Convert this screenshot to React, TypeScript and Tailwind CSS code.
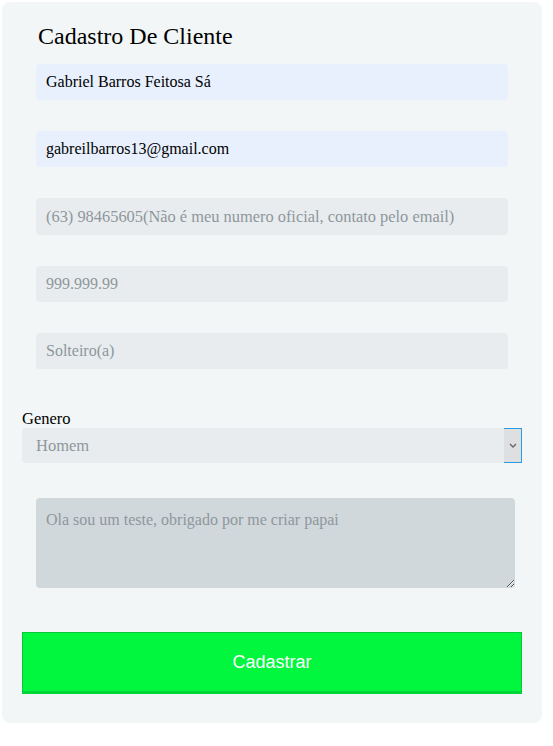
import * as React from 'react';

const serif = "font-['Liberation_Serif',serif]";

export default function App() {
  const [nome, setNome] = React.useState('Gabriel Barros Feitosa Sá');
  const [email, setEmail] = React.useState('gabreilbarros13@gmail.com');

  return (
    <div className={`bg-white min-h-[746px] pt-[2px] pl-[2px] ${serif}`}>
      <form
        className="w-[540px] h-[721px] bg-[#f2f6f7] rounded-lg pt-[20px] px-[20px]"
        onSubmit={(e) => e.preventDefault()}>
        <h2 className="text-[24px] leading-[28px] text-black ml-[16px] mb-[14px]">
          Cadastro De Cliente
        </h2>
        <div className="flex flex-col gap-[31px] ml-[14px] w-[472px]">
          <input
            className="h-[36px] rounded bg-[#e8f0fe] px-[10px] text-[16px] text-black outline-none"
            value={nome}
            onChange={(e) => setNome(e.target.value)}
          />
          <input
            className="h-[36px] rounded bg-[#e8f0fe] px-[10px] text-[16px] text-black outline-none"
            value={email}
            onChange={(e) => setEmail(e.target.value)}
          />
          <input
            className="h-[37px] rounded bg-[#e8ecee] px-[10px] text-[16.4px] placeholder:text-[#8e979c] outline-none"
            placeholder="(63) 98465605(Não é meu numero oficial, contato pelo email)"
          />
          <input
            className="h-[36px] rounded bg-[#e8ecee] px-[10px] text-[16px] placeholder:text-[#8e979c] outline-none"
            placeholder="999.999.99"
          />
          <input
            className="h-[36px] rounded bg-[#e8ecee] px-[10px] text-[16px] placeholder:text-[#8e979c] outline-none"
            placeholder="Solteiro(a)"
          />
        </div>
        <label className="block mt-[41px] text-[16.5px] leading-[18px] text-black">Genero</label>
        <div className="relative w-[500px] h-[35px]">
          <select className="w-full h-full rounded bg-[#e8ecee] pl-[14px] pt-[2px] text-[16.5px] text-[#8e979c] appearance-none outline-none">
            <option>Homem</option>
            <option>Mulher</option>
          </select>
          <div className="absolute right-0 top-0 h-full w-[18px] bg-[#dedfe0] border-y border-r border-[#2b9be0] flex items-center justify-center pointer-events-none">
            <svg width="8" height="5" viewBox="0 0 8 5">
              <path d="M1 1l3 3 3-3" stroke="#666" strokeWidth="1.3" fill="none" />
            </svg>
          </div>
        </div>
        <textarea
          className="block mt-[35px] ml-[14px] w-[479px] h-[90px] rounded bg-[#d1d8dc] px-[10px] py-[10px] text-[16px] placeholder:text-[#8e979c] outline-none"
          placeholder="Ola sou um teste, obrigado por me criar papai"
        />
        <button
          type="submit"
          className="mt-[44px] w-[500px] h-[62px] bg-[#00f73d] border border-[#05c93a] border-b-[3px] border-b-[#00d636] text-white text-[18px] font-['Liberation_Sans',sans-serif]">
          Cadastrar
        </button>
      </form>
    </div>
  );
}
